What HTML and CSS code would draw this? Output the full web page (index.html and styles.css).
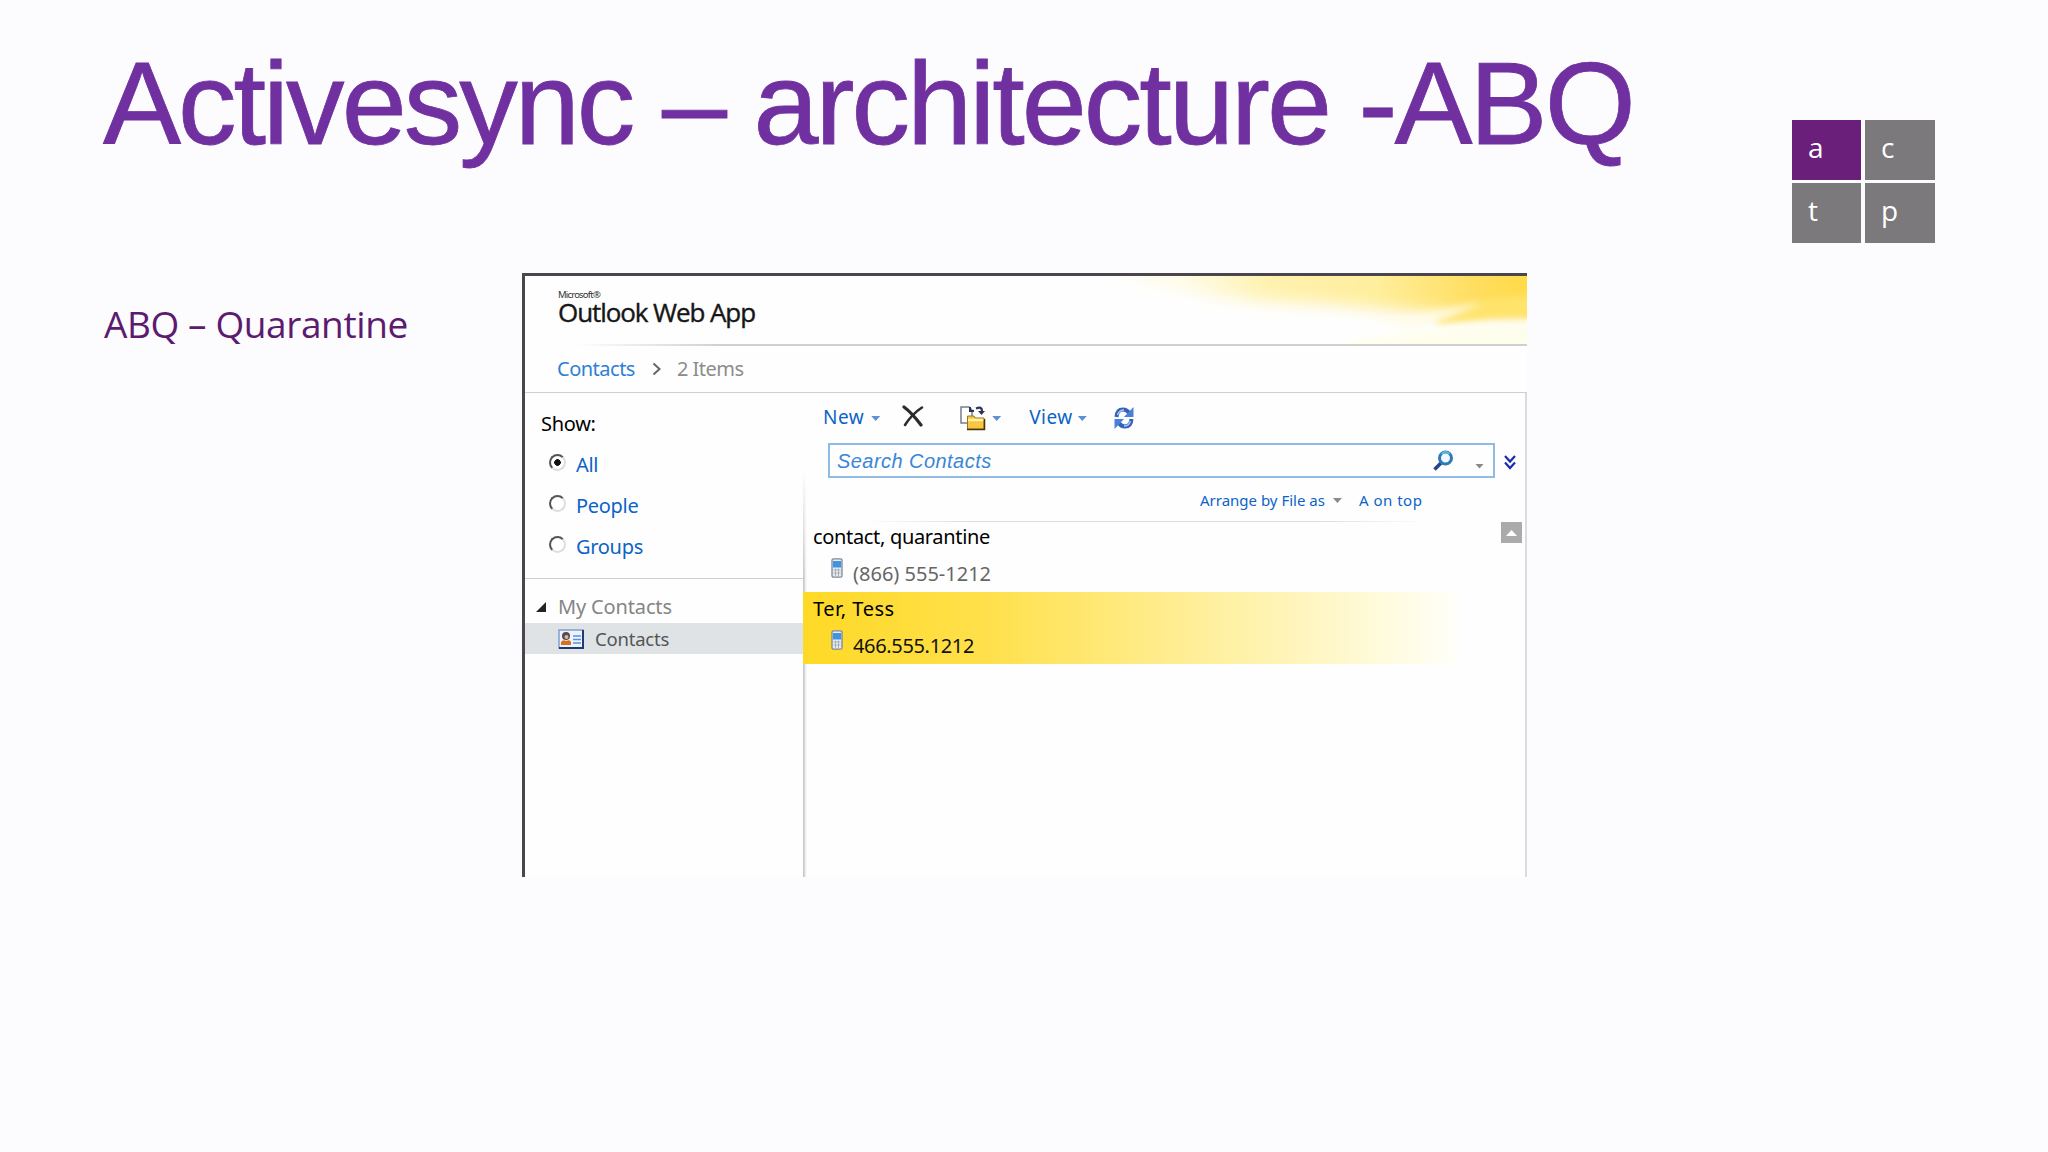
FILE: index.html
```html
<!DOCTYPE html>
<html lang="en">
<head>
    <meta charset="UTF-8">
    <meta name="viewport" content="width=device-width, initial-scale=1.0">
    <title>Activesync – architecture -ABQ</title>
    <link rel="stylesheet" href="styles.css">
</head>

<body>
    <header>
        <h1>Activesync – architecture -ABQ</h1>
        <div class="logo">
            <span class="on">a</span>
            <span>c</span>
            <span>t</span>
            <span>p</span>
        </div>
    </header>

    <main>
        <h2>ABQ – Quarantine</h2>

        <section class="owa">
            <div class="banner">
                <svg class="swoosh" width="420" height="68" viewBox="0 0 420 68">
                    <defs>
                        <linearGradient id="gold" x1="0" y1="0" x2="1" y2="0">
                            <stop offset="0" stop-color="#fff6b0" stop-opacity="0"/>
                            <stop offset=".15" stop-color="#fffbe0" stop-opacity=".7"/>
                            <stop offset=".35" stop-color="#fff2b0"/>
                            <stop offset=".6" stop-color="#ffee9c"/>
                            <stop offset=".8" stop-color="#ffdf64"/>
                            <stop offset="1" stop-color="#ffd83a"/>
                        </linearGradient>
                        <filter id="soft" x="-10%" y="-60%" width="120%" height="220%"><feGaussianBlur stdDeviation="8"/></filter>
                        <filter id="soft2" x="-10%" y="-60%" width="120%" height="220%"><feGaussianBlur stdDeviation="3.5"/></filter>
                    </defs>
                    <path d="M0-30V-6C60 12 110 24 180 26C240 28 270 34 320 36C350 38 380 38 450 42V-30Z" fill="url(#gold)" filter="url(#soft)"/>
                    <path d="M330 44C350 34 370 26 390 22L450 16V42C400 38 370 44 330 48Z" fill="#ffe36a" filter="url(#soft2)"/>
                    <path d="M270 46C330 37 350 30 376 27C360 34 345 42 300 52Z" fill="#fffce8" opacity=".8" filter="url(#soft2)"/>
                    <path d="M240 66C340 52 390 44 450 46V90H240Z" fill="#fffeec" opacity=".9" filter="url(#soft2)"/>
                </svg>
                <p class="ms">Microsoft®</p>
                <p class="product">Outlook Web App</p>
            </div>

            <nav class="crumbs">
                <a href="#">Contacts</a>
                <svg width="10" height="14" viewBox="0 0 10 14"><path d="M1.5 1.5L7.5 7L1.5 12.5" fill="none" stroke="#666" stroke-width="2"/></svg>
                <span>2 Items</span>
            </nav>

            <div class="columns">
                <aside>
                    <div class="filter">
                        <p>Show:</p>
                        <label><i class="radio checked"></i>All</label>
                        <label><i class="radio"></i>People</label>
                        <label><i class="radio"></i>Groups</label>
                    </div>
                    <div class="group">
                        <svg width="10" height="10" viewBox="0 0 10 10"><path d="M10 0V10H0Z" fill="#222"/></svg>
                        <span>My Contacts</span>
                    </div>
                    <div class="folder">
                        <svg width="26" height="20" viewBox="0 0 26 20">
                            <rect x="1" y="1" width="24" height="18" fill="#eef4ff" stroke="#7f9fd0" stroke-width="1.5"/>
                            <path d="M25 1V19H1" fill="none" stroke="#1f3a78" stroke-width="2"/>
                            <circle cx="8" cy="7" r="4" fill="#5a4a4a"/>
                            <circle cx="8.5" cy="8" r="2" fill="#d8b8a0"/>
                            <path d="M3 16V13Q5 10 8 12Q12 10 13 13V16Z" fill="#d8701c"/>
                            <path d="M15 7H23M15 10.500H23M15 14H23" stroke="#5d8fdc" stroke-width="1.5"/>
                        </svg>
                        <span>Contacts</span>
                    </div>
                </aside>

                <div class="content">
                    <div class="toolbar">
                        <a class="new" href="#">New</a>
                        <i class="arrow"></i>
                        <svg class="delete" width="22" height="22" viewBox="0 0 22 22">
                            <path d="M2 2Q10 8 19 20" fill="none" stroke="#2c2c2c" stroke-width="3.2" stroke-linecap="round"/>
                            <path d="M20 2.500Q10 9 3 20" fill="none" stroke="#2c2c2c" stroke-width="2.6" stroke-linecap="round"/>
                        </svg>
                        <svg class="move" width="26" height="26" viewBox="0 0 26 26">
                            <path d="M1 2H9L12 5V18H1Z" fill="#fff" stroke="#777c90" stroke-width="1.5"/>
                            <path d="M10 2V6H14" fill="none" stroke="#2b3158" stroke-width="2"/>
                            <path d="M16 3.500Q22 1 22 6" fill="none" stroke="#2b3158" stroke-width="2.2"/>
                            <path d="M18 6H25L21.500 10Z" fill="#2b3158"/>
                            <path d="M7.500 24V11H14L15.500 13H24V24Z" fill="#f6c644" stroke="#9a761c"/>
                            <path d="M8 15H23.500" stroke="#fff0a4" stroke-width="2.5"/>
                            <path d="M7 24.500H24.500V14" fill="none" stroke="#4b3605" stroke-width="1.5"/>
                        </svg>
                        <i class="arrow"></i>
                        <a class="view" href="#">View</a>
                        <i class="arrow"></i>
                        <svg class="refresh" width="20" height="24" viewBox="0 0 20 24">
                            <path d="M2.500 11Q3 3.500 9 3.500Q13 3.500 15 7" fill="none" stroke="#3560b4" stroke-width="4"/>
                            <path d="M19.500 1V11H10Z" fill="#4c7fd6"/>
                            <path d="M17.500 13Q17 20.500 11 20.500Q7 20.500 5 17" fill="none" stroke="#3560b4" stroke-width="4"/>
                            <path d="M.5 23V13H10Z" fill="#4c7fd6"/>
                            <path d="M3.500 9Q5 4 10 4M16.500 15Q15 20 10 20" fill="none" stroke="#a9c8f5" stroke-width="1.4"/>
                        </svg>
                    </div>

                    <div class="searchrow">
                        <div class="search">
                            <span>Search Contacts</span>
                            <svg width="21" height="21" viewBox="0 0 21 21">
                                <path d="M8 13L1.500 19.500" stroke="#27448c" stroke-width="3.5"/>
                                <circle cx="12.5" cy="8" r="6" fill="#eefaff" stroke="#2f79b8" stroke-width="3"/>
                                <path d="M8.500 4Q12 0 16.500 4" fill="none" stroke="#5fb8dc" stroke-width="2"/>
                            </svg>
                            <i class="arrow gray"></i>
                        </div>
                        <svg class="more" width="12" height="15" viewBox="0 0 12 15"><path d="M1 1L6 6.500L11 1M1 7.500L6 13L11 7.500" fill="none" stroke="#1b2fae" stroke-width="2.2"/></svg>
                    </div>

                    <div class="arrange">
                        <a href="#">Arrange by File as</a>
                        <i class="arrow gray"></i>
                        <a class="order" href="#">A on top</a>
                    </div>

                    <div class="list">
                        <div class="scroll"><i></i></div>
                        <div class="item">
                            <p class="name">contact, quarantine</p>
                            <p class="phone">
                                <svg width="12" height="20" viewBox="0 0 12 20">
                                    <rect x="1" y=".8" width="10" height="18.4" rx="1.5" fill="#e9edf2" stroke="#7d8794" stroke-width="1.3"/>
                                    <rect x="2" y="3" width="8" height="6.5" fill="#3f94e4"/>
                                    <path d="M2.500 12H9.500M2.500 15H9.500M4.500 10.500V18M7.500 10.500V18" stroke="#98a2ae" stroke-width=".8"/>
                                </svg>
                                <span>(866) 555-1212</span>
                            </p>
                        </div>
                        <div class="item selected">
                            <p class="name">Ter, Tess</p>
                            <p class="phone">
                                <svg width="12" height="20" viewBox="0 0 12 20">
                                    <rect x="1" y=".8" width="10" height="18.4" rx="1.5" fill="#e9edf2" stroke="#7d8794" stroke-width="1.3"/>
                                    <rect x="2" y="3" width="8" height="6.5" fill="#3f94e4"/>
                                    <path d="M2.500 12H9.500M2.500 15H9.500M4.500 10.500V18M7.500 10.500V18" stroke="#98a2ae" stroke-width=".8"/>
                                </svg>
                                <span>466.555.1212</span>
                            </p>
                        </div>
                    </div>
                </div>
            </div>
        </section>
    </main>
</body>
</html>
```
FILE: styles.css
```css
* {
    box-sizing: border-box;
    margin: 0;
    padding: 0;
}

body {
    width: 2048px;
    height: 1152px;
    overflow: hidden;
    background: #fcfbfd;
    font-family: "Noto Sans", "Open Sans", sans-serif;
    font-size: 20px;
}

a {
    color: #0b63c8;
    text-decoration: none;
}

svg {
    flex: none;
}

header {
    display: flex;
    justify-content: space-between;
    height: 273px;
    padding: 35px 113px 0 103px;
}

h1 {
    color: #7030a0;
    font-family: "Liberation Sans", Arial, sans-serif;
    font-size: 117px;
    font-weight: normal;
    letter-spacing: -2.98px;
    line-height: 138px;
    white-space: nowrap;
    -webkit-text-stroke: .8px #7030a0;
}

.logo {
    display: grid;
    grid-template-columns: 69px 70px;
    grid-template-rows: 60px 60px;
    gap: 3px 4px;
    margin-top: 85px;
}

.logo span {
    background: #7b797b;
    color: white;
    font-family: "Open Sans", sans-serif;
    font-size: 28px;
    line-height: 54px;
    padding-left: 16px;
}

.logo .on {
    background: #6a1f7a;
}

main {
    display: flex;
}

h2 {
    width: 522px;
    padding: 26px 0 0 104px;
    color: #5c1a70;
    font-family: "Open Sans", sans-serif;
    font-size: 37px;
    font-weight: normal;
    letter-spacing: -.4px;
    line-height: 50px;
    white-space: nowrap;
}

.owa {
    width: 1005px;
    height: 604px;
    background: #fefefe;
    border-top: 3px solid #4a464c;
    border-left: 3px solid #4a464c;
}

/* banner */
.banner {
    position: relative;
    height: 70px;
    padding: 14px 0 0 33px;
}

.banner::after {
    content: "";
    position: absolute;
    left: 50px;
    right: 0;
    bottom: 0;
    height: 2px;
    background: linear-gradient(90deg, transparent, #cfcfcf 150px);
}

.swoosh {
    position: absolute;
    top: 0;
    right: 0;
}

.ms {
    font-size: 9.5px;
    letter-spacing: -.8px;
    line-height: 10px;
    color: #333;
}

.product {
    color: #161616;
    font-family: "Open Sans", sans-serif;
    font-size: 26px;
    letter-spacing: -1.08px;
    line-height: 24px;
    -webkit-text-stroke: .4px #161616;
}

.crumbs {
    display: flex;
    align-items: center;
    height: 47px;
    padding: 0 0 2px 32px;
    border-bottom: 1px solid #d0d0d4;
    color: #8c8c8c;
    letter-spacing: -.5px;
}

.crumbs a {
    color: #2f7fd6;
}

.crumbs svg {
    margin: 2px 15px 0 17px;
}

.columns {
    display: flex;
    height: 484px;
}

/* left pane */
aside {
    width: 278px;
}

.filter {
    height: 186px;
    padding: 11px 0 0 16px;
    border-bottom: 1px solid #cdd0d4;
    letter-spacing: -.3px;
    line-height: 40px;
}

.filter label {
    display: flex;
    align-items: center;
    height: 41px;
    padding-left: 8px;
    color: #0b63c8;
}

.radio {
    width: 17px;
    height: 17px;
    margin: 0 10px 4px 0;
    border: 2px solid;
    border-color: #555 #ddd #ddd #555;
    border-radius: 50%;
    background: white;
}

.checked {
    background: radial-gradient(circle, #111 3px, white 3.6px);
}

.group {
    display: flex;
    align-items: center;
    height: 44px;
    padding: 11px 0 0 11px;
    color: #858585;
    letter-spacing: -.15px;
}

.group svg {
    margin-right: 12px;
}

.folder {
    display: flex;
    align-items: center;
    height: 31px;
    padding-left: 33px;
    background: #dfe3e5;
    color: #555;
    font-size: 18.5px;
    letter-spacing: -.2px;
}

.folder svg {
    margin-right: 11px;
}

/* right pane */
.content {
    position: relative;
    width: 724px;
    border-right: 2px solid #dcdbe0;
}

.content::before {
    content: "";
    position: absolute;
    left: 0;
    top: 75px;
    bottom: 0;
    width: 4px;
    background: linear-gradient(90deg, #c8c8cc 1px, #e8e8ea 2px, transparent);
    mask-image: linear-gradient(transparent, #000 110px);
}

.toolbar {
    display: flex;
    align-items: center;
    height: 45px;
    padding: 2px 0 0 20px;
    font-size: 19px;
    letter-spacing: .5px;
}

.arrow {
    width: 9px;
    height: 5px;
    margin-top: 4px;
    background: #5f8fd4;
    clip-path: polygon(0 0, 100% 0, 50% 100%);
}

.gray {
    background: #8a8a8a;
}

.new {
    margin-right: 7px;
}

.delete {
    margin: 0 36px 2px 22px;
}

.move {
    margin: 3px 6px 0 0;
}

.view {
    margin: 0 5px 0 28px;
}

.refresh {
    margin: 2px 0 0 27px;
}

.searchrow {
    display: flex;
    align-items: center;
    height: 35px;
    margin: 5px 0 0 25px;
}

.search {
    display: flex;
    align-items: center;
    width: 667px;
    height: 35px;
    padding: 0 9px 0 7px;
    border: 2px solid #8fbbe6;
    color: #3a86d6;
    font-family: "Liberation Sans", Arial, sans-serif;
    font-style: italic;
    letter-spacing: .45px;
}

.search span {
    padding-top: 2px;
}

.search svg {
    margin: 0 21px 0 auto;
}

.search .arrow {
    margin-top: 11px;
}

.more {
    margin: 3px 0 0 9px;
}

.arrange {
    display: flex;
    align-items: center;
    height: 43px;
    padding-left: 397px;
    font-size: 15px;
}

.arrange .arrow {
    margin: 2px 17px 0 8px;
}

.order {
    letter-spacing: .5px;
}

.list {
    position: relative;
    padding-top: 1px;
}

.list::before {
    content: "";
    position: absolute;
    top: 0;
    left: 60px;
    width: 562px;
    height: 1px;
    background: linear-gradient(90deg, transparent, #dcdcdc 20%, #dcdcdc 80%, transparent);
}

.scroll {
    position: absolute;
    top: 1px;
    right: 3px;
    width: 21px;
    height: 21px;
    padding: 8px 5px;
    background: #ababab;
}

.scroll i {
    display: block;
    height: 6px;
    background: white;
    clip-path: polygon(50% 0, 100% 100%, 0 100%);
}

.item {
    height: 70px;
    padding: 1px 0 0 10px;
    line-height: 28px;
}

.name {
    letter-spacing: -.33px;
}

.selected {
    height: 72px;
    padding-top: 3px;
    background: linear-gradient(90deg, #fed926, #ffe04a 25%, #ffed90 51%, #fff6c0 70%, #fffdec 86%, #fffff8 90%, transparent 91%);
}

.selected .name {
    letter-spacing: .55px;
}

.phone {
    display: flex;
    align-items: center;
    height: 42px;
    padding: 4px 0 0 18px;
    color: #666;
}

.phone svg {
    margin: 0 10px 12px 0;
}

.selected .phone {
    color: #111;
    letter-spacing: -.34px;
}
```
